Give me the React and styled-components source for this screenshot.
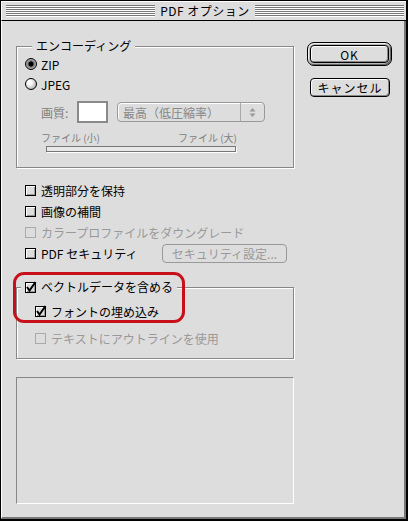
import React from 'react'
import styled, { createGlobalStyle } from 'styled-components'

const Global = createGlobalStyle`
  html, body { margin: 0; padding: 0; background: #fff; }
  body {
    font-family: "Noto Sans CJK JP", "Liberation Sans", sans-serif;
    font-size: 12px;
    color: #000;
  }
`

const Window = styled.div`
  width: 408px;
  height: 521px;
  box-sizing: border-box;
  border: 1px solid #000;
  border-right-width: 2px;
  border-bottom-width: 2px;
  background: #ddd;
  display: flex;
  flex-direction: column;
`

const TitleBar = styled.div`
  height: 20px;
  box-sizing: border-box;
  display: flex;
  align-items: center;
  padding: 0 2px 0 4px;
  border-top: 1px solid #fff;
  border-left: 1px solid #fff;
  border-bottom: 1px solid #000;
`

const Stripes = styled.div`
  flex: 1;
  height: 12px;
  background: repeating-linear-gradient(to bottom, #777 0 1px, #fff 1px 2px);
`

const Title = styled.div`
  padding: 0 5px;
  font-size: 12px;
  line-height: 14px;
  letter-spacing: 0.5px;
`

const Body = styled.div`
  flex: 1;
  display: flex;
  padding: 21px 0 0 14px;
  border-left: 1px solid #fff;
  border-right: 2px solid #777;
  border-bottom: 2px solid #777;
`

const LeftCol = styled.div`
  width: 278px;
  margin-top: 4px;
  display: flex;
  flex-direction: column;
`

const RightCol = styled.div`
  margin-left: 13px;
  display: flex;
  flex-direction: column;
`

const Group = styled.div`
  position: relative;
  box-sizing: border-box;
  height: ${p => p.$h}px;
  border: 1px solid #888;
  box-shadow: inset 1px 1px 0 #fff, 1px 1px 0 #fff;
  padding: ${p => p.$pad};
  display: flex;
  flex-direction: column;
  gap: ${p => p.$gap || 0}px;
`

const Legend = styled.div`
  position: absolute;
  top: -9px;
  left: ${p => p.$left}px;
  padding: 0 4px;
  background: #ddd;
  line-height: 16px;
  display: flex;
  align-items: center;
  gap: 5px;
`

const Row = styled.div`
  height: ${p => p.$h || 21}px;
  display: flex;
  align-items: center;
  gap: ${p => p.$gap ?? 5}px;
  color: ${p => (p.$disabled ? '#999' : '#000')};
  white-space: nowrap;
`

const RadioDot = styled.span`
  width: 12px;
  height: 12px;
  box-sizing: border-box;
  border-radius: 50%;
  border: 1px solid #000;
  flex: none;
  background: ${p =>
    p.$on
      ? 'radial-gradient(circle at 50% 50%, #000 0 32%, #777 40%, #bbb 75%, #888 100%)'
      : 'radial-gradient(circle at 35% 35%, #fff 0 20%, #ccc 60%, #888 100%)'};
`

const Box = styled.span`
  position: relative;
  width: 11px;
  height: 11px;
  box-sizing: border-box;
  flex: none;
  border: 1px solid ${p => (p.$disabled ? '#aaa' : '#000')};
  background: #ddd;
  box-shadow: ${p => (p.$disabled ? 'none' : 'inset 1px 1px 0 #fff, inset -1px -1px 0 #999')};
`

const Check = styled.svg`
  position: absolute;
  left: -1px;
  top: -2px;
  overflow: visible;
`

const Checkbox = ({ checked, disabled }) => (
  <Box $disabled={disabled}>
    {checked && (
      <Check width="12" height="12" viewBox="0 0 12 12">
        <path d="M2 6 L4.5 9.5 L10.5 1" stroke="#000" strokeWidth="2" fill="none" />
      </Check>
    )}
  </Box>
)

const Quality = styled.div`
  margin: 7px 0 0 16px;
  height: 22px;
  display: flex;
  align-items: center;
`

const DimLabel = styled.span`
  width: 36px;
  color: #808080;
`

const Field = styled.div`
  width: 31px;
  height: 22px;
  box-sizing: border-box;
  border: 2px solid #8a8a8a;
  background: #fff;
  margin-right: 9px;
`

const Popup = styled.div`
  width: 148px;
  height: 20px;
  box-sizing: border-box;
  border: 1px solid #999;
  border-radius: 4px;
  box-shadow: inset 1px 1px 0 #fff;
  display: flex;
  align-items: center;
  color: #888;
`

const PopupText = styled.span`
  flex: 1;
  padding-left: 5px;
`

const PopupArrow = styled.span`
  width: 23px;
  height: 100%;
  border-left: 1px solid #aaa;
  display: flex;
  align-items: center;
  justify-content: center;
`

const SliderLabels = styled.div`
  margin: 9px 0 0 16px;
  width: 196px;
  display: flex;
  justify-content: space-between;
  font-size: 10px;
  line-height: 12px;
  color: #808080;
`

const Track = styled.div`
  margin: 2px 0 0 21px;
  width: 190px;
  height: 6px;
  box-sizing: border-box;
  border: 1px solid #777;
  background: #e8e8e8;
  box-shadow: 1px 1px 0 #fff;
`

const List = styled.div`
  margin-top: 12px;
  padding-left: 9px;
  display: flex;
  flex-direction: column;
`

const Spread = styled(Row)`
  justify-content: space-between;
  padding-right: 7px;
`

const Left = styled.span`
  display: flex;
  align-items: center;
  gap: 5px;
`

const FlatButton = styled.div`
  width: 125px;
  height: 19px;
  box-sizing: border-box;
  border: 1px solid #999;
  border-radius: 4px;
  color: #999;
  display: flex;
  align-items: center;
  justify-content: center;
`

const VectorSection = styled.div`
  position: relative;
  margin-top: 23px;
`

const Highlight = styled.div`
  position: absolute;
  top: -15px;
  left: -3px;
  width: 172px;
  height: 51px;
  box-sizing: border-box;
  border: 3px solid #c8101a;
  border-radius: 11px;
  pointer-events: none;
`

const Well = styled.div`
  margin-top: 18px;
  height: 127px;
  box-sizing: border-box;
  border-top: 1px solid #888;
  border-left: 1px solid #888;
  border-right: 1px solid #fff;
  border-bottom: 1px solid #fff;
`

const DefaultRing = styled.div`
  width: 85px;
  height: 24px;
  box-sizing: border-box;
  border: 1px solid #000;
  border-radius: 7px;
  padding: 2px;
  background: #b8b8b8;
  box-shadow: inset 1px 1px 0 #eee, inset -1px -1px 0 #666;
`

const Button = styled.div`
  width: ${p => p.$w}px;
  height: ${p => p.$h}px;
  margin: ${p => p.$m || 0};
  box-sizing: border-box;
  border: 1px solid #000;
  border-radius: 4px;
  background: #ddd;
  box-shadow: inset 1px 1px 0 #fff, inset -1px -1px 0 #888;
  display: flex;
  align-items: center;
  justify-content: center;
  letter-spacing: 1px;
`

export default function App() {
  return (
    <>
      <Global />
      <Window>
        <TitleBar>
          <Stripes />
          <Title>PDF オプション</Title>
          <Stripes />
        </TitleBar>
        <Body>
          <LeftCol>
            <Group $h={122} $pad="7px 0 0 8px">
              <Legend $left={15}>エンコーディング</Legend>
              <Row $h={20} $gap={4}>
                <RadioDot $on />
                ZIP
              </Row>
              <Row $h={20} $gap={4}>
                <RadioDot />
                JPEG
              </Row>
              <Quality>
                <DimLabel>画質:</DimLabel>
                <Field />
                <Popup>
                  <PopupText>最高（低圧縮率）</PopupText>
                  <PopupArrow>
                    <svg width="7" height="11" viewBox="0 0 7 11">
                      <path d="M3.5 1 L6.5 4.5 H0.5 Z M0.5 6.5 H6.5 L3.5 10 Z" fill="#999" />
                    </svg>
                  </PopupArrow>
                </Popup>
              </Quality>
              <SliderLabels>
                <span>ファイル (小)</span>
                <span>ファイル (大)</span>
              </SliderLabels>
              <Track />
            </Group>

            <List>
              <Row>
                <Checkbox />
                透明部分を保持
              </Row>
              <Row>
                <Checkbox />
                画像の補間
              </Row>
              <Row $disabled>
                <Checkbox disabled />
                カラープロファイルをダウングレード
              </Row>
              <Spread>
                <Left>
                  <Checkbox />
                  PDF セキュリティ
                </Left>
                <FlatButton>セキュリティ設定...</FlatButton>
              </Spread>
            </List>

            <VectorSection>
              <Group $h={72} $pad="13px 0 0 18px" $gap={6}>
                <Legend $left={4}>
                  <Checkbox checked />
                  ベクトルデータを含める
                </Legend>
                <Row>
                  <Checkbox checked />
                  フォントの埋め込み
                </Row>
                <Row $disabled>
                  <Checkbox disabled />
                  テキストにアウトラインを使用
                </Row>
              </Group>
              <Highlight />
            </VectorSection>

            <Well />
          </LeftCol>

          <RightCol>
            <DefaultRing>
              <Button $w={79} $h={18}>OK</Button>
            </DefaultRing>
            <Button $w={80} $h={19} $m="12px 0 0 3px">キャンセル</Button>
          </RightCol>
        </Body>
      </Window>
    </>
  )
}
